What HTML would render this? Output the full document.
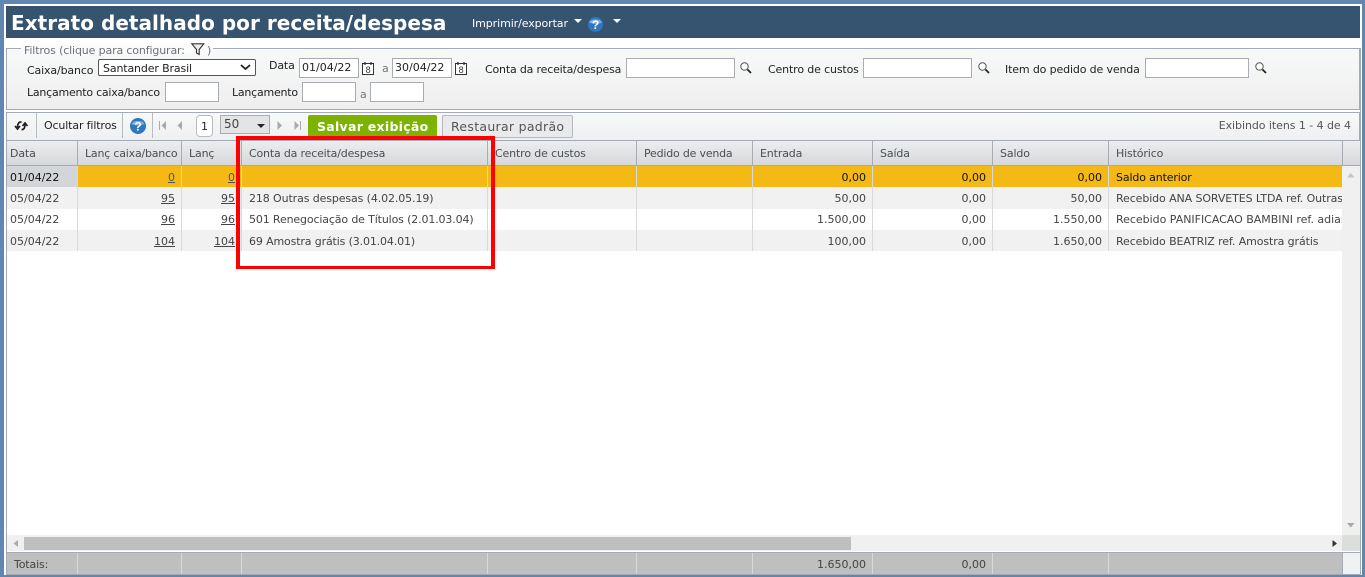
<!DOCTYPE html>
<html lang="pt-BR"><head><meta charset="utf-8"><title>Extrato</title>
<style>
html,body{margin:0;padding:0}
body{width:1365px;height:577px;overflow:hidden;position:relative;background:#fff;font-family:"DejaVu Sans","Liberation Sans",sans-serif;font-size:11px;color:#333;letter-spacing:-.14px}
div,span,b{position:absolute;white-space:nowrap;line-height:14px}
svg{position:absolute;overflow:visible}
.lb{color:#222}
.in{background:#fff;border:1px solid #a9adb2;box-sizing:border-box}
.vl{width:1px}
.h{top:147px;color:#4a4f55}
.c{color:#444;line-height:14px}
.r{text-align:right}
.n{letter-spacing:0}
.hs{letter-spacing:-.1px}
u{text-decoration:underline}
</style></head><body>
<div style="left:0;top:0;width:1365px;height:4px;background:#5f87b0"></div>
<div style="left:0;top:0;width:4px;height:577px;background:#5f87b0"></div>
<div style="left:1362px;top:0;width:3px;height:577px;background:#5f87b0"></div>
<div style="left:0;top:575px;width:1365px;height:2px;background:#5f87b0"></div>

<div style="left:6px;top:6px;width:1354px;height:32px;background:#36536f"></div>
<b style="left:11px;top:10px;font-size:20px;line-height:26px;color:#fff;font-weight:700;letter-spacing:.03px">Extrato detalhado por receita/despesa</b>
<div style="left:472px;top:17px;color:#fff;letter-spacing:-.09px">Imprimir/exportar</div>
<svg style="left:574px;top:19px" width="9" height="5"><path d="M0 0H8L4 4Z" fill="#fff"/></svg>
<svg style="left:588px;top:17px" width="16" height="16"><circle cx="7.500" cy="7.500" r="7.500" fill="#2f78bf"/><path d="M1 5.500A7 5 0 0 1 14 5.500Q7.500 8.500 1 5.500Z" fill="#7fb2e2"/><text x="7.500" y="12" font-size="12" font-weight="700" text-anchor="middle" fill="#fff" font-family="Liberation Sans">?</text></svg>
<svg style="left:613px;top:19px" width="9" height="5"><path d="M0 0H8L4 4Z" fill="#fff"/></svg>

<div style="left:6px;top:48px;width:1354px;height:62px;box-sizing:border-box;border:1px solid #a4abb5;background:linear-gradient(#f8f9f9,#eeeeef)"></div>
<div style="left:21px;top:44px;width:192px;height:10px;background:#fbfbfb"></div>
<div style="left:24px;top:44px;color:#6c7178">Filtros (clique para configurar:</div>
<svg style="left:191px;top:43px" width="14" height="13"><path d="M.8 .8H12.800L8.200 6.500V11.500L5.500 10V6.500Z" fill="#eee" stroke="#333" stroke-width="1.100"/></svg>
<div style="left:207px;top:44px;color:#6c7178">)</div>

<div class="lb" style="left:27px;top:64px">Caixa/banco</div>
<div class="in" style="left:98px;top:59px;width:158px;height:17px;border:1px solid #555;border-radius:2px"></div>
<div class="lb" style="left:103px;top:62px">Santander Brasil</div>
<svg style="left:240px;top:64px" width="11" height="7"><path d="M1 1L5.500 5L10 1" fill="none" stroke="#222" stroke-width="1.800"/></svg>
<div class="lb" style="left:269px;top:59px">Data</div>
<div class="in" style="left:299px;top:58px;width:60px;height:20px"></div>
<div class="lb n" style="left:302px;top:61px">01/04/22</div>
<svg style="left:362px;top:62px" width="13" height="14"><rect x=".5" y="1.500" width="11" height="11" fill="#fff" stroke="#333"/><path d="M3 0V3M9 0V3" stroke="#333" stroke-width="1.300"/><text x="6" y="11" font-size="9" text-anchor="middle" fill="#333" font-family="Liberation Sans">8</text></svg>
<div style="left:382px;top:62px;color:#777">a</div>
<div class="in" style="left:392px;top:58px;width:60px;height:20px"></div>
<div class="lb n" style="left:395px;top:61px">30/04/22</div>
<svg style="left:455px;top:62px" width="13" height="14"><rect x=".5" y="1.500" width="11" height="11" fill="#fff" stroke="#333"/><path d="M3 0V3M9 0V3" stroke="#333" stroke-width="1.300"/><text x="6" y="11" font-size="9" text-anchor="middle" fill="#333" font-family="Liberation Sans">8</text></svg>
<div class="lb" style="left:485px;top:63px;letter-spacing:-.18px">Conta da receita/despesa</div>
<div class="in" style="left:626px;top:58px;width:109px;height:20px"></div>
<svg style="left:740px;top:62px" width="12" height="12"><circle cx="4.500" cy="4.500" r="3.700" fill="#fff" stroke="#555"/><path d="M7.500 7.500L11 11" stroke="#222" stroke-width="1.800"/></svg>
<div class="lb" style="left:768px;top:63px">Centro de custos</div>
<div class="in" style="left:863px;top:58px;width:109px;height:20px"></div>
<svg style="left:978px;top:62px" width="12" height="12"><circle cx="4.500" cy="4.500" r="3.700" fill="#fff" stroke="#555"/><path d="M7.500 7.500L11 11" stroke="#222" stroke-width="1.800"/></svg>
<div class="lb" style="left:1005px;top:63px">Item do pedido de venda</div>
<div class="in" style="left:1145px;top:58px;width:104px;height:20px"></div>
<svg style="left:1255px;top:62px" width="12" height="12"><circle cx="4.500" cy="4.500" r="3.700" fill="#fff" stroke="#555"/><path d="M7.500 7.500L11 11" stroke="#222" stroke-width="1.800"/></svg>
<div class="lb" style="left:27px;top:86px;letter-spacing:-.23px">Lançamento caixa/banco</div>
<div class="in" style="left:165px;top:82px;width:54px;height:20px"></div>
<div class="lb" style="left:232px;top:86px;letter-spacing:-.23px">Lançamento</div>
<div class="in" style="left:302px;top:82px;width:54px;height:20px"></div>
<div style="left:360px;top:88px;color:#777">a</div>
<div class="in" style="left:370px;top:82px;width:54px;height:20px"></div>

<div style="left:6px;top:112px;width:1354px;height:29px;box-sizing:border-box;border:1px solid #a4abb5;border-bottom:0;background:linear-gradient(#f8f9f9,#eeeff0)"></div>
<svg style="left:14px;top:120px" width="15" height="12"><path d="M7.500 2Q3.500 1.500 3.500 8M1 6L3.500 9L6 6M7.500 9.500Q11 10 11 4M8.500 6L11 3L13.500 6" fill="none" stroke="#222" stroke-width="1.700"/></svg>
<div class="vl" style="left:36px;top:113px;height:25px;background:#b9bdc2"></div>
<div class="lb" style="left:44px;top:119px">Ocultar filtros</div>
<div class="vl" style="left:122px;top:113px;height:25px;background:#b9bdc2"></div>
<svg style="left:130px;top:118px" width="16" height="16"><circle cx="8" cy="8" r="8" fill="#2f78bf"/><path d="M1.500 6A7 5 0 0 1 14.500 6Q8 9 1.500 6Z" fill="#7fb2e2"/><text x="8" y="12.500" font-size="12" font-weight="700" text-anchor="middle" fill="#fff" font-family="Liberation Sans">?</text></svg>
<div class="vl" style="left:152px;top:113px;height:25px;background:#b9bdc2"></div>
<svg style="left:159px;top:121px" width="8" height="10"><path d="M.5 0V9" stroke="#aaa"/><path d="M7 0V9L2.500 4.500Z" fill="#aaa"/></svg>
<svg style="left:177px;top:121px" width="6" height="10"><path d="M5 0V9L.5 4.500Z" fill="#aaa"/></svg>
<div style="left:196px;top:115px;width:17px;height:22px;box-sizing:border-box;border:1px solid #b8bcc0;border-radius:4px;background:#fff"></div>
<div class="lb" style="left:201px;top:120px">1</div>
<div style="left:220px;top:115px;width:50px;height:19px;box-sizing:border-box;border:1px solid #a9adb2;background:#e3e4e5"></div>
<div class="n" style="left:224px;top:117px;color:#444;font-size:12px">50</div>
<svg style="left:257px;top:124px" width="9" height="5"><path d="M0 0H8L4 4Z" fill="#222"/></svg>
<svg style="left:277px;top:121px" width="6" height="10"><path d="M.5 0V9L5 4.500Z" fill="#aaa"/></svg>
<svg style="left:294px;top:121px" width="8" height="10"><path d="M.5 0V9L5 4.500Z" fill="#aaa"/><path d="M6.500 0V9" stroke="#aaa"/></svg>
<div style="left:308px;top:115px;width:129px;height:22px;background:#7db300;border-radius:2px"></div>
<b style="left:317px;top:120px;font-size:12.500px;color:#fff;font-weight:700;letter-spacing:.28px">Salvar exibição</b>
<div style="left:442px;top:115px;width:131px;height:23px;box-sizing:border-box;border:1px solid #b5b8bc;border-radius:2px;background:#e9eaeb"></div>
<div style="left:451px;top:120px;font-size:12.500px;color:#555;letter-spacing:.29px">Restaurar padrão</div>
<div style="right:14px;top:119px;color:#555;letter-spacing:-.06px">Exibindo itens 1 - 4 de 4</div>

<div style="left:6px;top:140px;width:1354px;height:26px;box-sizing:border-box;border-top:1px solid #a4abb5;border-bottom:1px solid #a4abb5;background:linear-gradient(#ecedee,#d6d8db)"></div>
<div class="h" style="left:10px">Data</div>
<div class="h" style="left:85px;letter-spacing:-.2px">Lanç caixa/banco</div>
<div class="h" style="left:189px">Lanç</div>
<div class="h" style="left:249px;letter-spacing:-.18px">Conta da receita/despesa</div>
<div class="h" style="left:495px">Centro de custos</div>
<div class="h" style="left:644px;letter-spacing:-.2px">Pedido de venda</div>
<div class="h" style="left:760px">Entrada</div>
<div class="h" style="left:880px">Saída</div>
<div class="h" style="left:1000px">Saldo</div>
<div class="h" style="left:1116px">Histórico</div>

<div style="left:6px;top:141px;width:1px;height:434px;background:#a4abb5"></div>
<div style="left:1360px;top:48px;width:1px;height:527px;background:#a4abb5"></div>

<div style="left:7px;top:166px;width:71px;height:21px;background:#d3d6d9"></div>
<div style="left:78px;top:166px;width:1264px;height:21px;background:#f5b916"></div>
<div style="left:7px;top:187px;width:1335px;height:22px;background:#f1f1f2"></div>
<div style="left:7px;top:209px;width:1335px;height:21px;background:#fff"></div>
<div style="left:7px;top:230px;width:1335px;height:21px;background:#f1f1f2"></div>

<div class="c n" style="left:10px;top:171px;color:#111">01/04/22</div>
<div class="c r n" style="left:78px;width:97px;top:171px;color:#555"><u>0</u></div>
<div class="c r n" style="left:182px;width:53px;top:171px;color:#555"><u>0</u></div>
<div class="c r n" style="left:753px;width:113px;top:171px;color:#111">0,00</div>
<div class="c r n" style="left:873px;width:113px;top:171px;color:#111">0,00</div>
<div class="c r n" style="left:993px;width:109px;top:171px;color:#111">0,00</div>
<div class="c" style="left:1116px;top:171px;color:#111">Saldo anterior</div>

<div class="c n" style="left:10px;top:192px">05/04/22</div>
<div class="c r n" style="left:78px;width:97px;top:192px"><u>95</u></div>
<div class="c r n" style="left:182px;width:53px;top:192px"><u>95</u></div>
<div class="c" style="left:249px;top:192px;letter-spacing:-.11px">218 Outras despesas (4.02.05.19)</div>
<div class="c r n" style="left:753px;width:113px;top:192px">50,00</div>
<div class="c r n" style="left:873px;width:113px;top:192px">0,00</div>
<div class="c r n" style="left:993px;width:109px;top:192px">50,00</div>
<div class="c hs" style="left:1116px;top:192px;width:226px;overflow:hidden">Recebido ANA SORVETES LTDA ref. Outras despesas</div>

<div class="c n" style="left:10px;top:213px">05/04/22</div>
<div class="c r n" style="left:78px;width:97px;top:213px"><u>96</u></div>
<div class="c r n" style="left:182px;width:53px;top:213px"><u>96</u></div>
<div class="c" style="left:249px;top:213px">501 Renegociação de Títulos (2.01.03.04)</div>
<div class="c r n" style="left:753px;width:113px;top:213px">1.500,00</div>
<div class="c r n" style="left:873px;width:113px;top:213px">0,00</div>
<div class="c r n" style="left:993px;width:109px;top:213px">1.550,00</div>
<div class="c" style="left:1116px;top:213px;width:226px;overflow:hidden;letter-spacing:-.02px">Recebido PANIFICACAO BAMBINI ref. adiantamento</div>

<div class="c n" style="left:10px;top:235px">05/04/22</div>
<div class="c r n" style="left:78px;width:97px;top:235px"><u>104</u></div>
<div class="c r n" style="left:182px;width:53px;top:235px"><u>104</u></div>
<div class="c" style="left:249px;top:235px">69 Amostra grátis (3.01.04.01)</div>
<div class="c r n" style="left:753px;width:113px;top:235px">100,00</div>
<div class="c r n" style="left:873px;width:113px;top:235px">0,00</div>
<div class="c r n" style="left:993px;width:109px;top:235px">1.650,00</div>
<div class="c hs" style="left:1116px;top:235px">Recebido BEATRIZ ref. Amostra grátis</div>

<div class="vl" style="left:77px;top:141px;height:24px;background:#a9adb3"></div>
<div class="vl" style="left:181px;top:141px;height:24px;background:#a9adb3"></div>
<div class="vl" style="left:241px;top:141px;height:24px;background:#a9adb3"></div>
<div class="vl" style="left:487px;top:141px;height:24px;background:#a9adb3"></div>
<div class="vl" style="left:636px;top:141px;height:24px;background:#a9adb3"></div>
<div class="vl" style="left:752px;top:141px;height:24px;background:#a9adb3"></div>
<div class="vl" style="left:872px;top:141px;height:24px;background:#a9adb3"></div>
<div class="vl" style="left:992px;top:141px;height:24px;background:#a9adb3"></div>
<div class="vl" style="left:1108px;top:141px;height:24px;background:#a9adb3"></div>
<div class="vl" style="left:1342px;top:141px;height:24px;background:#a9adb3"></div>

<div class="vl" style="left:77px;top:166px;height:85px;background:#d8d9db"></div>
<div class="vl" style="left:181px;top:166px;height:85px;background:#d8d9db"></div>
<div class="vl" style="left:241px;top:166px;height:85px;background:#d8d9db"></div>
<div class="vl" style="left:487px;top:166px;height:85px;background:#d8d9db"></div>
<div class="vl" style="left:636px;top:166px;height:85px;background:#d8d9db"></div>
<div class="vl" style="left:752px;top:166px;height:85px;background:#d8d9db"></div>
<div class="vl" style="left:872px;top:166px;height:85px;background:#d8d9db"></div>
<div class="vl" style="left:992px;top:166px;height:85px;background:#d8d9db"></div>
<div class="vl" style="left:1108px;top:166px;height:85px;background:#d8d9db"></div>

<div style="left:1342px;top:166px;width:18px;height:369px;background:#f0f0f0"></div>
<svg style="left:1347px;top:173px" width="8" height="5"><path d="M0 4.500H7.500L3.750 0Z" fill="#c4c4c4"/></svg>
<svg style="left:1347px;top:523px" width="8" height="5"><path d="M0 0H7.500L3.750 4.500Z" fill="#a8a8a8"/></svg>
<div style="left:7px;top:535px;width:1335px;height:16px;background:#f0f0f0"></div>
<svg style="left:13px;top:540px" width="6" height="8"><path d="M5 0V7L.5 3.500Z" fill="#aaa"/></svg>
<div style="left:24px;top:537px;width:827px;height:13px;background:#bfbfbf"></div>
<svg style="left:1332px;top:540px" width="6" height="8"><path d="M.5 0V7L5 3.500Z" fill="#333"/></svg>
<div style="left:1342px;top:535px;width:18px;height:16px;background:#dcdedc"></div>

<div style="left:7px;top:552px;width:1335px;height:22px;background:#bfbfbf;border-top:1px solid #a4abb5"></div>
<div style="left:1342px;top:552px;width:18px;height:23px;background:#f0f1f3;border-top:1px solid #a4abb5;border-left:1px solid #a4abb5;box-sizing:border-box"></div>
<div style="left:7px;top:574px;width:1354px;height:1px;background:#a4abb5"></div>
<div class="c" style="left:14px;top:558px;color:#444">Totais:</div>
<div class="c r n" style="left:753px;width:113px;top:558px;color:#444">1.650,00</div>
<div class="c r n" style="left:873px;width:113px;top:558px;color:#444">0,00</div>
<div class="vl" style="left:77px;top:553px;height:21px;background:#d8d9db"></div>
<div class="vl" style="left:181px;top:553px;height:21px;background:#d8d9db"></div>
<div class="vl" style="left:241px;top:553px;height:21px;background:#d8d9db"></div>
<div class="vl" style="left:487px;top:553px;height:21px;background:#d8d9db"></div>
<div class="vl" style="left:636px;top:553px;height:21px;background:#d8d9db"></div>
<div class="vl" style="left:752px;top:553px;height:21px;background:#d8d9db"></div>
<div class="vl" style="left:872px;top:553px;height:21px;background:#d8d9db"></div>
<div class="vl" style="left:992px;top:553px;height:21px;background:#d8d9db"></div>
<div class="vl" style="left:1108px;top:553px;height:21px;background:#d8d9db"></div>

<div style="left:236px;top:136px;width:259px;height:133px;box-sizing:border-box;border:4px solid #f00;border-bottom-width:3px"></div>
</body></html>
